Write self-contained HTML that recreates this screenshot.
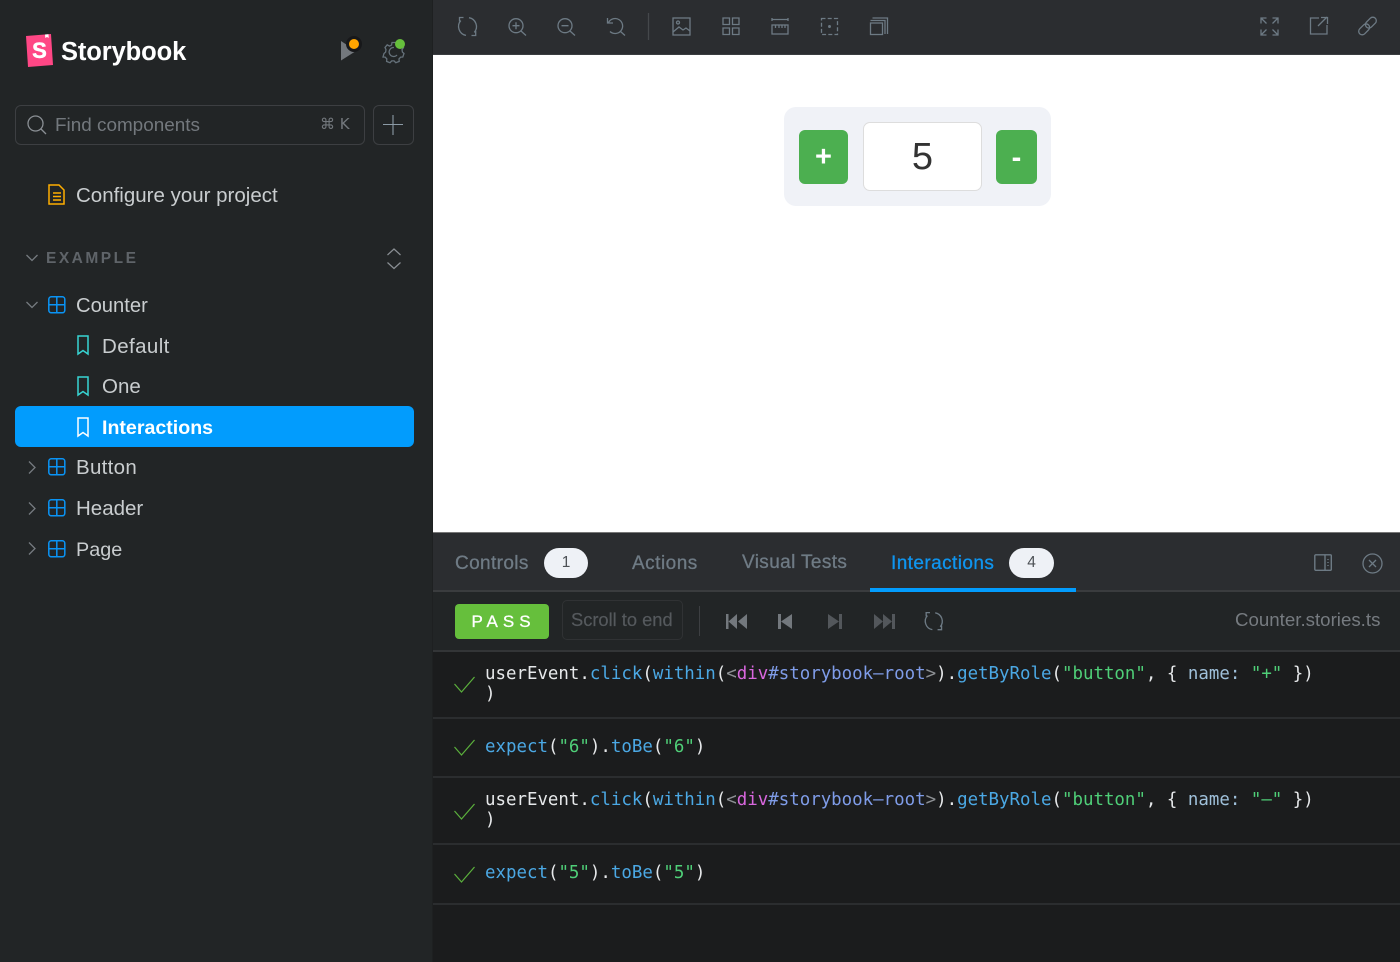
<!DOCTYPE html>
<html><head><meta charset="utf-8"><title>Storybook</title>
<style>
html,body{margin:0;padding:0;width:1400px;height:962px;overflow:hidden;background:#1b1c1d}
*{box-sizing:border-box}
.a{position:absolute}
.t{position:absolute;white-space:pre;font-family:"Liberation Sans",sans-serif;line-height:24px}
.nav{font-size:20.5px;color:#c9cdcf}
.tab{font-size:19px;letter-spacing:.38px;color:#6f7b85;-webkit-text-stroke:.3px #6f7b85}
.m{position:absolute;white-space:pre;font-family:"DejaVu Sans Mono","Liberation Mono",monospace;font-size:17.43px;line-height:20px;color:#e6e8ea}
.b{color:#4ba8e4}.g{color:#4fcf78}.p{color:#d867de}.i{color:#7f9ce8}.n{color:#9fc0da}.d{color:#8d9094}
svg{position:absolute;overflow:visible;fill:none}
.hr{position:absolute;left:433px;width:967px;height:2px;background:#2b2d2f}
</style></head><body>
<div class="a" style="left:0;top:0;width:433px;height:962px;background:#222526;border-right:1px solid #1e2021"></div>
<div class="a" style="left:433px;top:0;width:967px;height:55px;background:#2b2d30;border-bottom:1px solid #3a3d40"></div>
<div class="a" style="left:433px;top:55px;width:967px;height:477px;background:#fff"></div>
<div class="a" style="left:433px;top:532px;width:967px;height:60px;background:#2b2d30;border-top:1px solid #777;border-bottom:2px solid #3a3c3e"></div>
<div class="a" style="left:433px;top:592px;width:967px;height:59px;background:#222526"></div>
<div class="hr" style="top:650px;background:#333537"></div>
<div class="hr" style="top:716.500px"></div><div class="hr" style="top:776px"></div><div class="hr" style="top:842.500px"></div><div class="hr" style="top:902.500px"></div>

<!-- logo -->
<svg style="left:26px;top:34px" width="27" height="33" viewBox="0 0 27 33"><path d="M0 2 25 0 27 31 2 33Z" fill="#ff4785"/><path d="M19 .5l3.500-.3.200 3.800-1.700-1-1.700 1z" fill="#fff"/><text x="13.500" y="24" text-anchor="middle" font-family="Liberation Sans,sans-serif" font-weight="700" font-size="22" fill="#fff" stroke="#fff" stroke-width=".5">S</text></svg>
<div class="t" style="left:61px;top:38px;font-size:25.500px;font-weight:700;color:#fff;letter-spacing:-.1px;line-height:28px">Storybook</div>
<!-- play -->
<svg style="left:341px;top:41px" width="20" height="20"><path d="M0 0 15 10 0 19.500Z" fill="#73787d"/></svg>
<div class="a" style="left:346px;top:36px;width:16px;height:16px;border-radius:50%;background:#ffa500;border:3px solid #17181a"></div>
<svg style="left:383px;top:41px" width="22" height="22" viewBox="0 0 22 22" stroke="#66727b" stroke-width="1.300"><path d="M9 1.500h4l.6 2.600 2.300 1 2.300-1.300 2.300 2.700-1.500 2.100.4 2.500 1.600 1.400-1.200 3.500-2.100.1-1.700 1.800.2 2.500-3.400 1.300-1.700-1.800h-2.400l-1.700 1.800-3.400-1.300.2-2.500-1.700-1.800-2.100-.1L1 12.500l1.600-1.400.4-2.500L2 6.500l2.200-2.700 2.300 1.300 2-1Z"/><path d="M14 14a4.500 4.500 0 1 1-3-7.500"/></svg>
<div class="a" style="left:395px;top:39px;width:10px;height:10px;border-radius:50%;background:#66bf3c"></div>

<!-- search -->
<div class="a" style="left:15px;top:105px;width:350px;height:40px;border:1px solid #3d3f42;border-radius:6px"></div>
<svg style="left:27px;top:115px" width="20" height="20" stroke="#8b9095" stroke-width="1.300"><circle cx="8.500" cy="8.500" r="7.500"/><path d="m14 14 5 5"/></svg>
<div class="t" style="left:55px;top:114px;font-size:18.900px;color:#73787d">Find components</div>
<div class="t" style="left:320px;top:112px;font-size:15px;color:#73787d;font-family:'DejaVu Sans',sans-serif">⌘ K</div>
<div class="a" style="left:373px;top:105px;width:41px;height:40px;border:1px solid #3d3f42;border-radius:6px"></div>
<svg style="left:383px;top:115px" width="20" height="20" stroke="#8b9aa5" stroke-width="1.100"><path d="M0 9.500h20M10 0v20"/></svg>

<!-- configure -->
<svg style="left:48px;top:184px" width="18" height="21" stroke="#ffae00" stroke-width="1.500"><path d="M1 1h10l5 5v14H1Z"/><path d="M5 9h8M5 12.500h8M5 16h8"/></svg>
<div class="t nav" style="left:76px;top:184px">Configure your project</div>

<!-- example -->
<svg style="left:26px;top:254px" width="12" height="8" stroke="#767b80" stroke-width="1.300"><path d="M.5 1 6 6.500 11.500 1"/></svg>
<div class="t" style="left:46px;top:247px;font-size:15.500px;font-weight:700;letter-spacing:2.500px;color:#5f6469">EXAMPLE</div>
<svg style="left:387px;top:248px" width="14" height="22" stroke="#8a8f94" stroke-width="1.200"><path d="M.5 7 7 1l6.500 6M.5 14.500 7 20.500l6.500-6"/></svg>

<!-- tree -->
<svg style="left:26px;top:301px" width="12" height="8" stroke="#767b80" stroke-width="1.300"><path d="M.5 1 6 6.500 11.500 1"/></svg>
<svg style="left:48px;top:296px" width="18" height="18" stroke="#0a94f5" stroke-width="1.500"><rect x=".8" y=".8" width="16" height="16" rx="2.500"/><path d="M8.800 1v16M1 8.800h16"/></svg>
<div class="t nav" style="left:76px;top:294px;font-size:20.200px">Counter</div>

<svg style="left:77px;top:335px" width="12" height="20" stroke="#37d5d3" stroke-width="1.500"><path d="M1 1h10v18l-5-3.500L1 19Z"/></svg>
<div class="t nav" style="left:102px;top:335px;letter-spacing:.4px">Default</div>
<svg style="left:77px;top:376px" width="12" height="20" stroke="#37d5d3" stroke-width="1.500"><path d="M1 1h10v18l-5-3.500L1 19Z"/></svg>
<div class="t nav" style="left:102px;top:375px">One</div>
<div class="a" style="left:15px;top:406px;width:399px;height:41px;background:#029cfd;border-radius:6px"></div>
<svg style="left:77px;top:417px" width="12" height="20" stroke="#fff" stroke-width="1.500"><path d="M1 1h10v18l-5-3.500L1 19Z"/></svg>
<div class="t nav" style="left:102px;top:416px;color:#fff;font-weight:700;font-size:19.600px">Interactions</div>

<svg style="left:28px;top:461px" width="8" height="13" stroke="#767b80" stroke-width="1.300"><path d="M1 .5 7 6.500l-6 6"/></svg>
<svg style="left:48px;top:458px" width="18" height="18" stroke="#0a94f5" stroke-width="1.500"><rect x=".8" y=".8" width="16" height="16" rx="2.500"/><path d="M8.800 1v16M1 8.800h16"/></svg>
<div class="t nav" style="left:76px;top:456px;letter-spacing:.3px">Button</div>
<svg style="left:28px;top:502px" width="8" height="13" stroke="#767b80" stroke-width="1.300"><path d="M1 .5 7 6.500l-6 6"/></svg>
<svg style="left:48px;top:499px" width="18" height="18" stroke="#0a94f5" stroke-width="1.500"><rect x=".8" y=".8" width="16" height="16" rx="2.500"/><path d="M8.800 1v16M1 8.800h16"/></svg>
<div class="t nav" style="left:76px;top:497px">Header</div>
<svg style="left:28px;top:542px" width="8" height="13" stroke="#767b80" stroke-width="1.300"><path d="M1 .5 7 6.500l-6 6"/></svg>
<svg style="left:48px;top:540px" width="18" height="18" stroke="#0a94f5" stroke-width="1.500"><rect x=".8" y=".8" width="16" height="16" rx="2.500"/><path d="M8.800 1v16M1 8.800h16"/></svg>
<div class="t nav" style="left:76px;top:538px;font-size:19.800px">Page</div>

<!-- toolbar -->
<svg style="left:433px;top:0" width="480" height="55" stroke="#6d7a84" stroke-width="1.300">
<path d="M36 17.700A9 9 0 0 1 41.300 32.400M38.500 35.500H42.700V31M33 35.400A9 9 0 0 1 27.800 20.600M30.500 17.500H26.500V21.500"/>
<circle cx="83" cy="25.700" r="7"/><path d="m88 31 5 4.500M79.500 25.700h7M83 22.200v7"/>
<circle cx="132" cy="25.700" r="7"/><path d="m137 31 5 4.500M128.500 25.700h7"/>
<path d="M175.500 22.500A7.500 7.500 0 1 1 177 31.500M174.500 18v5h5.500M187 31l5 4.500"/>
<path d="M215.500 13v27" stroke="#45484b"/>
<rect x="240" y="18" width="17" height="17"/><circle cx="245" cy="22.500" r="1.500"/><path d="m240 32 6-5 4 3 3-2 4 3"/>
<path d="M290 18h6.500v6.500H290zM299.500 18h6.500v6.500h-6.500zM290 28h6.500v6.500H290zM299.500 28h6.500v6.500h-6.500z"/>
<path d="M339 19.500h16M339 18v3M355 18v3"/><rect x="339" y="25" width="16" height="9"/><path d="M342.500 25v3M346 25v3M349 25v3M352 25v3"/>
<rect x="388.500" y="18.500" width="16" height="16" stroke-dasharray="4 2.200"/><circle cx="396.500" cy="26.500" r=".8" fill="#6d7a84"/>
<rect x="437.500" y="23" width="12" height="11.500"/><path d="M437.500 20.500H452V34M439.500 18H454.500V34"/>
</svg>
<svg style="left:1240px;top:0" width="160" height="55" stroke="#6d7a84" stroke-width="1.300">
<path d="M21 18l5.500 5.500M38 18l-5.500 5.500M21 35l5.500-5.500M38 35l-5.500-5.500M21 23.500V18h5.500M32.500 18H38v5.500M21 29.500V35h5.500M32.500 35H38v-5.500"/>
<path d="M79 18H70.500V34H87V25M78 26l9-9M81 17.500h6.500V24"/>
<g transform="translate(127.500 26) rotate(-45)"><rect x="-11" y="-3.500" width="12.500" height="7" rx="3.500"/><rect x="-1.500" y="-3.500" width="12.500" height="7" rx="3.500"/></g>
</svg>

<!-- counter -->
<div class="a" style="left:784px;top:107px;width:267px;height:99px;background:#f0f2f7;border-radius:12px"></div>
<div class="a" style="left:799px;top:130px;width:49px;height:54px;background:#4caf50;border-radius:6px"></div>
<div class="t" style="left:799px;top:130px;width:49px;text-align:center;color:#fff;font-size:29px;font-weight:700;line-height:54px">+</div>
<div class="a" style="left:863px;top:122px;width:119px;height:69px;background:#fff;border:1px solid #ddd;border-radius:7px"></div>
<div class="t" style="left:863px;top:123px;width:119px;text-align:center;color:#333;font-size:38px;line-height:69px">5</div>
<div class="a" style="left:996px;top:130px;width:41px;height:54px;background:#4caf50;border-radius:6px"></div>
<div class="t" style="left:996px;top:130px;width:41px;text-align:center;color:#fff;font-size:29px;font-weight:700;line-height:56px">-</div>

<!-- tabs -->
<div class="t tab" style="left:455px;top:552px">Controls</div>
<div class="a" style="left:544px;top:548px;width:44px;height:30px;border-radius:15px;background:#eef1f6"></div>
<div class="t" style="left:544px;top:551px;width:44px;text-align:center;font-size:15.500px;color:#4d5156">1</div>
<div class="t tab" style="left:632px;top:552px;letter-spacing:.5px">Actions</div>
<div class="t tab" style="left:742px;top:551px">Visual Tests</div>
<div class="t tab" style="left:891px;top:552px;color:#0f95ef;-webkit-text-stroke:.3px #0f95ef;letter-spacing:.42px">Interactions</div>
<div class="a" style="left:1009px;top:548px;width:45px;height:30px;border-radius:15px;background:#eef1f6"></div>
<div class="t" style="left:1009px;top:551px;width:45px;text-align:center;font-size:15.500px;color:#4d5156">4</div>
<div class="a" style="left:870px;top:588px;width:206px;height:4px;background:#029cfd"></div>
<svg style="left:1314px;top:554px" width="18" height="18" stroke="#6d7a84" stroke-width="1.400"><rect x=".8" y=".8" width="16.500" height="15.500" rx="1"/><path d="M11 1v15M14 5v1M14 8v1M14 11v1"/></svg>
<svg style="left:1362px;top:553px" width="21" height="21" stroke="#6d7a84" stroke-width="1.300"><circle cx="10.500" cy="10.500" r="9.500"/><path d="m7 7 7 7M14 7l-7 7"/></svg>

<!-- toolbar 2 -->
<div class="a" style="left:455px;top:604px;width:94px;height:35px;background:#66bf3c;border-radius:4px"></div>
<div class="t" style="left:455px;top:604px;width:94px;text-align:center;font-size:17px;font-weight:400;-webkit-text-stroke:.3px #fff;letter-spacing:5px;color:#fff;line-height:35px;padding-left:3px">PASS</div>
<div class="a" style="left:562px;top:600px;width:121px;height:40px;border:1px solid #303234;border-radius:5px"></div>
<div class="t" style="left:571px;top:608px;font-size:18.300px;color:#55595d;-webkit-text-stroke:.2px #55595d">Scroll to end</div>
<div class="a" style="left:699px;top:606px;width:1px;height:30px;background:#3d3f42"></div>
<svg style="left:725px;top:612px" width="230" height="20">
<path d="M1 2h2.500v15H1zM12 2v15L3.500 9.500ZM22 2v15L13 9.500Z" fill="#73787d"/>
<path d="M53 2h3v15h-3zM67 2v15L56 9.500Z" fill="#73787d"/>
<path d="M103 2v15l11-7.500ZM114 2h3v15h-3z" fill="#53575b"/>
<path d="M149 2v15l9-7.500ZM158 2v15l9-7.500ZM167 2h3v15h-3z" fill="#53575b"/>
<g transform="translate(176 -16) scale(.95 .95)" stroke="#6d7a84" stroke-width="1.400"><path d="M36 17.700A9 9 0 0 1 41.300 32.400M38.500 35.500H42.700V31M33 35.400A9 9 0 0 1 27.800 20.600M30.500 17.500H26.500V21.500"/></g>
</svg>
<div class="t" style="left:1235px;top:608px;font-size:18.700px;color:#767b80">Counter.stories.ts</div>

<!-- steps -->
<svg style="left:454px;top:676px" width="22" height="17" stroke="#5bb13c" stroke-width="1.200"><path d="M.5 8 7.500 16 20.500 1"/></svg>
<div class="m" style="left:485px;top:664px">userEvent.<span class="b">click</span>(<span class="b">within</span>(<span class="d">&lt;</span><span class="p">div</span><span class="i">#storybook–root</span><span class="d">&gt;</span>).<span class="b">getByRole</span>(<span class="g">"button"</span>, { <span class="n">name:</span> <span class="g">"+"</span> })</div>
<div class="m" style="left:485px;top:684px">)</div>
<svg style="left:454px;top:739px" width="22" height="17" stroke="#5bb13c" stroke-width="1.200"><path d="M.5 8 7.500 16 20.500 1"/></svg>
<div class="m" style="left:485px;top:737px"><span class="b">expect</span>(<span class="g">"6"</span>).<span class="b">toBe</span>(<span class="g">"6"</span>)</div>
<svg style="left:454px;top:803px" width="22" height="17" stroke="#5bb13c" stroke-width="1.200"><path d="M.5 8 7.500 16 20.500 1"/></svg>
<div class="m" style="left:485px;top:790px">userEvent.<span class="b">click</span>(<span class="b">within</span>(<span class="d">&lt;</span><span class="p">div</span><span class="i">#storybook–root</span><span class="d">&gt;</span>).<span class="b">getByRole</span>(<span class="g">"button"</span>, { <span class="n">name:</span> <span class="g">"–"</span> })</div>
<div class="m" style="left:485px;top:810px">)</div>
<svg style="left:454px;top:866px" width="22" height="17" stroke="#5bb13c" stroke-width="1.200"><path d="M.5 8 7.500 16 20.500 1"/></svg>
<div class="m" style="left:485px;top:863px"><span class="b">expect</span>(<span class="g">"5"</span>).<span class="b">toBe</span>(<span class="g">"5"</span>)</div>
</body></html>
